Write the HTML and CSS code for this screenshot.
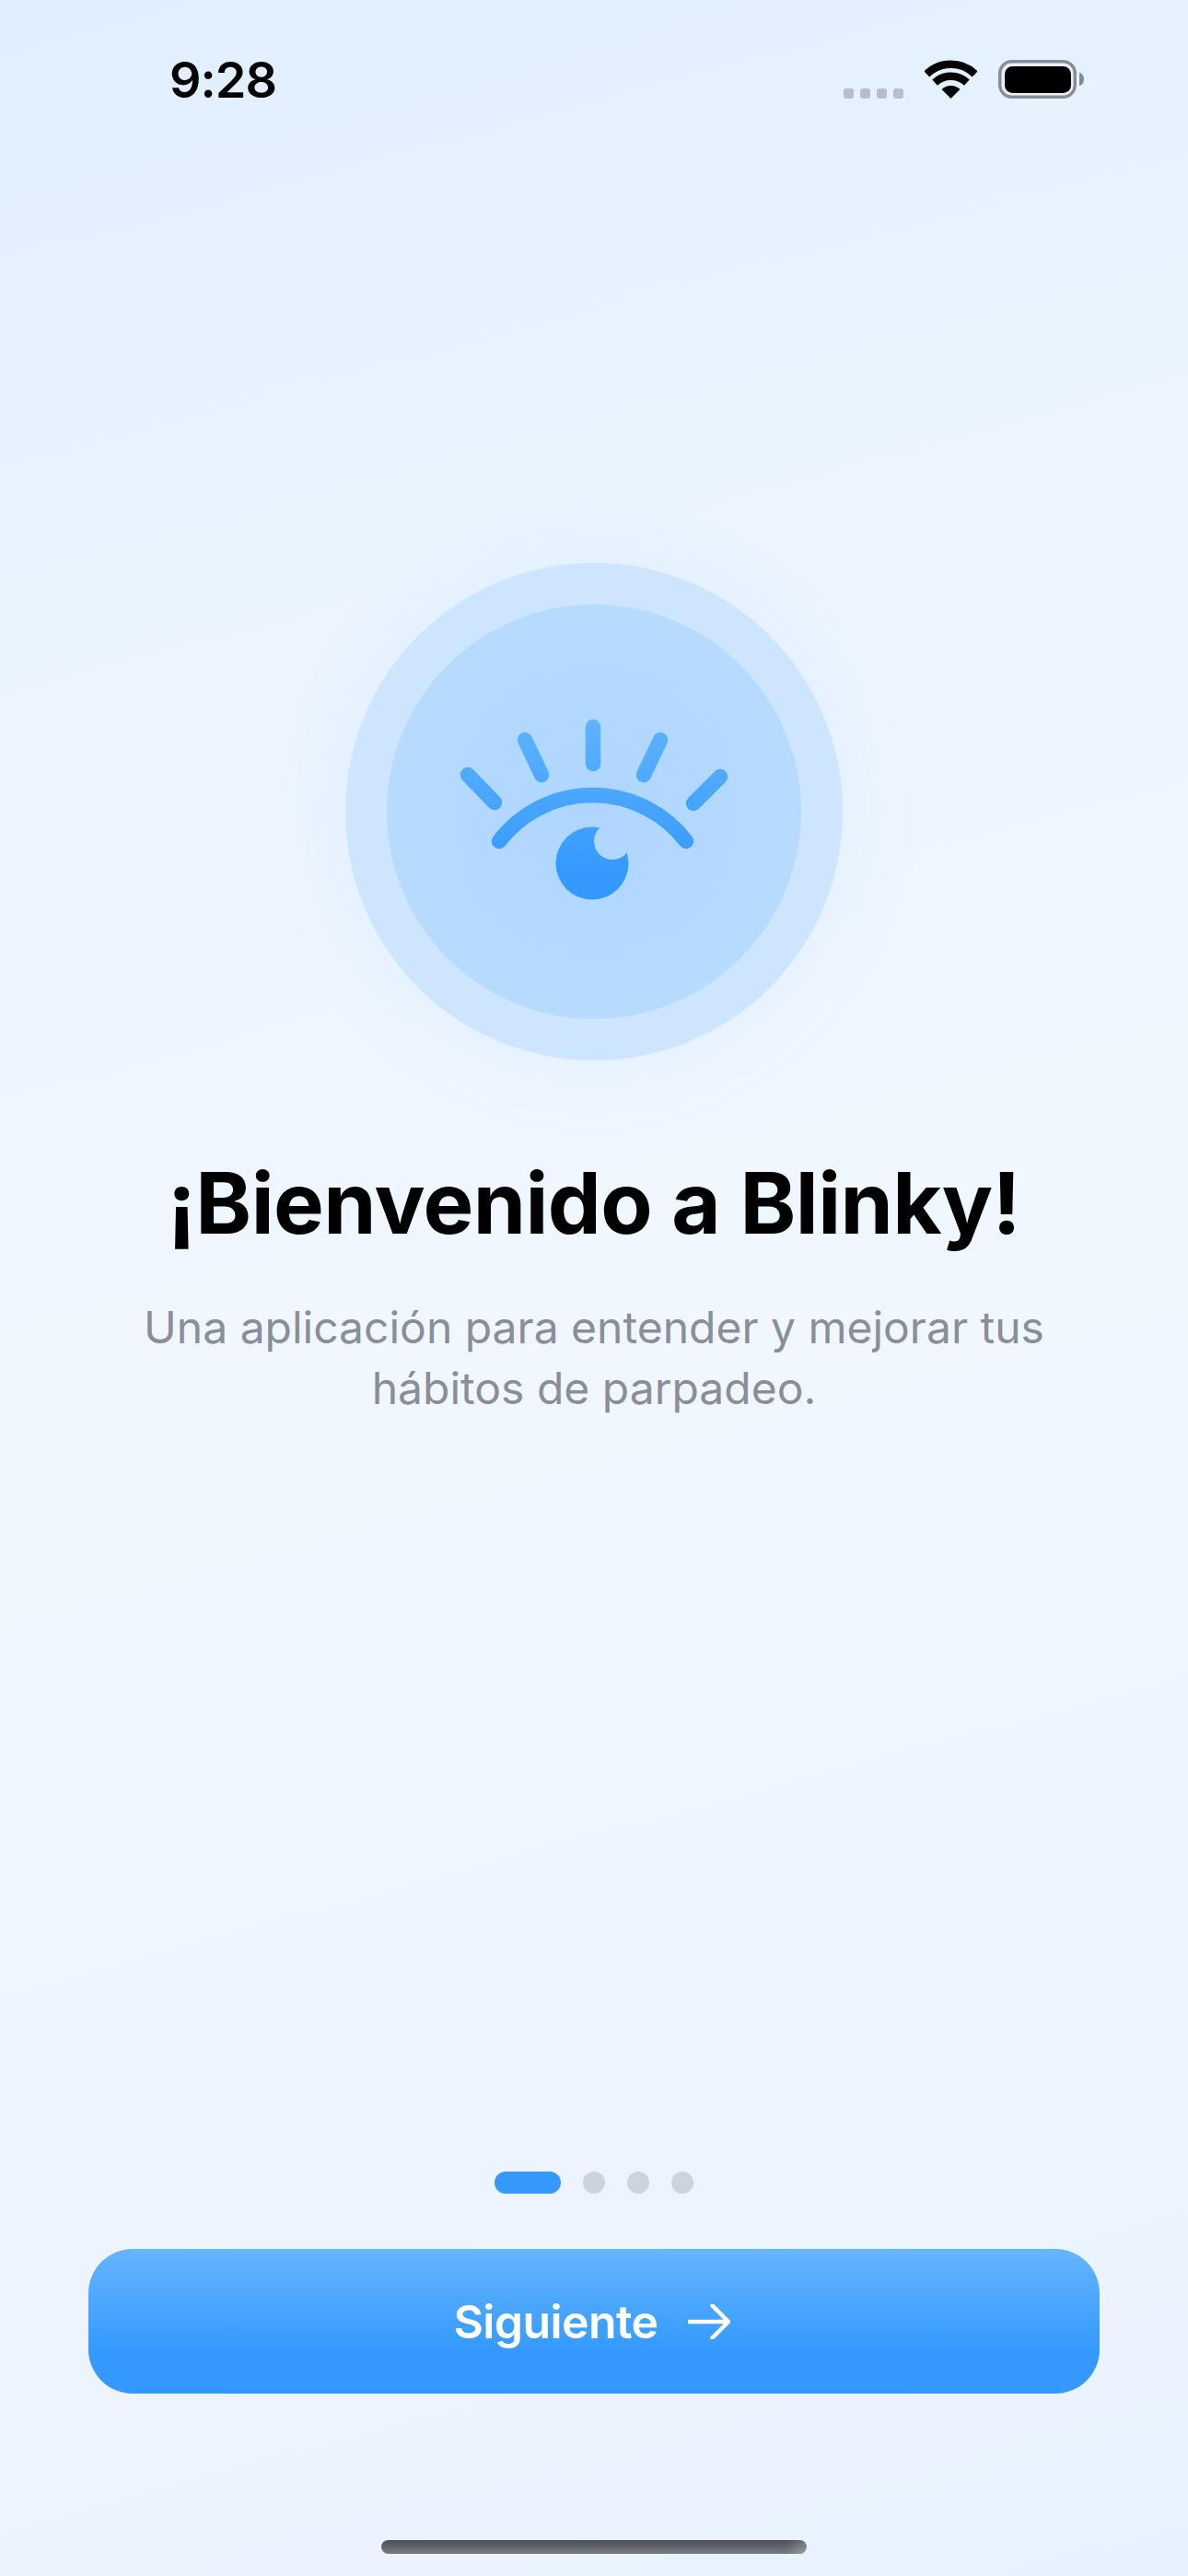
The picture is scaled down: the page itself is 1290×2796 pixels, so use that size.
FILE: index.html
```html
<!DOCTYPE html>
<html lang="es">
<head>
<meta charset="utf-8">
<title>Blinky</title>
<link rel="stylesheet" href="styles.css">
</head>
<body>
<div class="screen">
  <header class="status-bar">
    <span class="time">9:28</span>
    <div class="status-icons">
      <div class="signal"><i></i><i></i><i></i><i></i></div>
      <svg class="wifi" width="57" height="42" viewBox="0 0 57 42">
        <g fill="none" stroke="#000" stroke-width="8.5">
          <path d="M2.3 15.4A37.75 37.75 0 0 1 54.7 15.4"/>
          <path d="M11.1 24.6A25.5 25.5 0 0 1 45.9 24.6"/>
        </g>
        <path d="M28.5 42L18.6 32.1A14 14 0 0 1 38.4 32.1Z" fill="#000"/>
      </svg>
      <svg class="battery" width="93" height="42" viewBox="0 0 93 42">
        <rect x="1.75" y="1.75" width="81.5" height="38.5" rx="13" fill="none" stroke="#8a8d93" stroke-width="3.5"/>
        <rect x="7" y="7" width="72" height="29" rx="8.5" fill="#000"/>
        <path d="M88 14c3 .5 5 3.500 5 7s-2 6.500-5 7z" fill="#85888e"/>
      </svg>
    </div>
  </header>

  <main class="hero">
    <div class="halo">
      <div class="halo-inner">
        <svg class="eye" width="350" height="250" viewBox="470 756 350 250">
          <defs>
            <linearGradient id="eyeGrad" gradientUnits="userSpaceOnUse" x1="0" y1="780" x2="0" y2="950">
              <stop offset="0" stop-color="#5fb3ff"/>
              <stop offset="1" stop-color="#3399ff"/>
            </linearGradient>
            <mask id="pupilCut" maskUnits="userSpaceOnUse" x="470" y="756" width="350" height="250">
              <rect x="470" y="756" width="350" height="250" fill="#fff"/>
              <circle cx="665" cy="913" r="20" fill="#000"/>
            </mask>
          </defs>
          <g fill="none" stroke="url(#eyeGrad)" stroke-width="16.500" stroke-linecap="round">
            <path d="M644 789V829"/>
            <path d="M570 803L588 841"/>
            <path d="M717 803L699 841"/>
            <path d="M508 841L537 871"/>
            <path d="M782 843L753 872"/>
            <path d="M542 913A128 128 0 0 1 745 913"/>
          </g>
          <circle cx="643" cy="937" r="39.500" fill="url(#eyeGrad)" mask="url(#pupilCut)"/>
        </svg>
      </div>
    </div>
    <h1 class="title">¡Bienvenido a Blinky!</h1>
    <p class="subtitle">Una aplicación para entender y mejorar tus<br>hábitos de parpadeo.</p>
  </main>

  <nav class="pager">
    <span class="pager-dot is-active"></span>
    <span class="pager-dot"></span>
    <span class="pager-dot"></span>
    <span class="pager-dot"></span>
  </nav>

  <button class="next-btn" type="button">
    <span>Siguiente</span>
    <svg width="46" height="38" viewBox="0 0 46 38">
      <path d="M1.500 19H44M26.500 1.500L44 19L26.500 36.500" fill="none" stroke="#fff" stroke-width="4.500" stroke-linecap="round" stroke-linejoin="round"/>
    </svg>
  </button>

  <div class="home-bar"></div>
</div>
</body>
</html>
```
FILE: styles.css
```css
* { box-sizing: border-box; }
html, body { margin: 0; padding: 0; }
body { font-family: "Inter", "Liberation Sans", sans-serif; }

.screen {
  width: 1290px;
  height: 2796px;
  display: flex;
  flex-direction: column;
  overflow: hidden;
  background: linear-gradient(165deg, #e0eeff 0%, #e9f3ff 18%, #f1f7ff 50%, #eff5ff 75%, #e8f2ff 100%);
}

.status-bar {
  height: 107px;
  padding: 0 113px 0 184px;
  display: flex;
  justify-content: space-between;
  align-items: flex-end;
  flex: none;
}
.time {
  font-size: 54px;
  font-weight: 600;
  line-height: 1;
  letter-spacing: -1px;
  color: #000;
  margin-bottom: -7px;
}
.status-icons { display: flex; align-items: flex-end; gap: 23px; }
.signal { display: flex; gap: 7px; }
.signal i { width: 11px; height: 11px; border-radius: 3px; background: #b8bfc9; }
.wifi, .battery { display: block; }

.hero {
  padding-top: 504px;
  display: flex;
  flex-direction: column;
  align-items: center;
  flex: none;
}
.halo {
  width: 540px;
  height: 540px;
  border-radius: 50%;
  padding: 45px;
  background: #cde5ff;
  box-shadow: 0 8px 100px rgba(51, 153, 255, 0.07);
}
.halo-inner {
  width: 450px;
  height: 450px;
  border-radius: 50%;
  background: radial-gradient(circle at 50% 50%, #aed6ff 0%, #bbdcff 100%);
  display: flex;
  align-items: center;
  justify-content: center;
}
.eye { display: block; }

.title {
  margin: 99px 0 0;
  font-size: 92px;
  font-weight: 700;
  line-height: 112px;
  letter-spacing: -0.55px;
  color: #000;
  white-space: nowrap;
}
.subtitle {
  margin: 46px 0 0;
  font-size: 48px;
  font-weight: 400;
  line-height: 66px;
  color: #8a8e98;
  text-align: center;
}

.pager {
  margin-top: auto;
  display: flex;
  justify-content: center;
  gap: 24px;
  flex: none;
}
.pager-dot { width: 24px; height: 24px; border-radius: 12px; background: #cdd3dc; }
.pager-dot.is-active { width: 72px; background: #3399ff; }

.next-btn {
  margin: 60px 96px 0;
  height: 157px;
  padding: 0 5px 0 0;
  border: 0;
  border-radius: 48px;
  flex: none;
  display: flex;
  align-items: center;
  justify-content: center;
  gap: 32px;
  color: #fff;
  font-family: inherit;
  font-size: 50px;
  font-weight: 600;
  letter-spacing: -0.6px;
  background: linear-gradient(180deg, #66b5ff 0%, #3399ff 72%);
}
.next-btn svg { display: block; }

.home-bar {
  width: 462px;
  height: 15px;
  margin: 159px auto 24px;
  border-radius: 8px;
  flex: none;
  background:
    linear-gradient(100deg, transparent 95%, rgba(255, 255, 255, 0.25) 100%),
    linear-gradient(180deg, #4a4d55 0%, #7a7d82 100%);
}
```
